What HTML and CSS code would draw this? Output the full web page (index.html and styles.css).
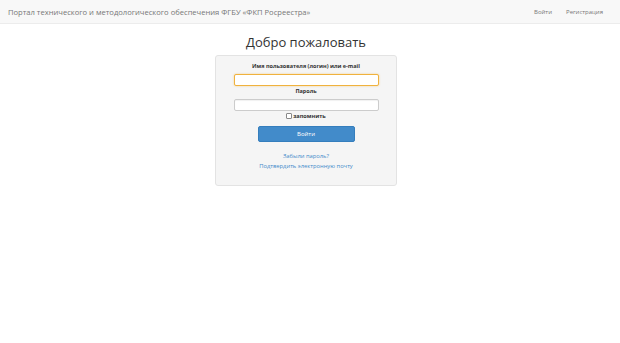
FILE: index.html
```html
<!DOCTYPE html>
<html lang="ru">
<head>
    <meta charset="UTF-8">
    <title>Вход</title>
    <link rel="stylesheet" href="styles.css">
</head>
<body>
    <div class="navbar">
        <a class="brand" href="#">Портал технического и методологического обеспечения ФГБУ «ФКП Росреестра»</a>
        <div class="nav-links">
            <a href="#">Войти</a>
            <a href="#">Регистрация</a>
        </div>
    </div>

    <div class="content">
        <h1 class="title">Добро пожаловать</h1>

        <div class="well">
            <label class="field-label" for="login">Имя пользователя (логин) или e-mail</label>
            <input class="field focus" type="text" id="login">
            <label class="field-label" for="pass">Пароль</label>
            <input class="field" type="password" id="pass">
            <label class="remember"><input type="checkbox">запомнить</label>
            <button class="btn">Войти</button>
            <div class="links">
                <a href="#">Забыли пароль?</a>
                <a href="#">Подтвердить электронную почту</a>
            </div>
        </div>
    </div>
</body>
</html>
```

FILE: styles.css
```css
body {
    margin: 0;
    font-family: "Open Sans", "Noto Sans", sans-serif;
    background-color: #fff;
    color: #333;
}
a {
    text-decoration: none;
}
.navbar {
    height: 24px;
    background-color: #f8f8f8;
    border-bottom: 1px solid #ececec;
    display: flex;
    align-items: center;
    justify-content: space-between;
    padding: 0 17px 0 8px;
    box-sizing: border-box;
}
.brand {
    font-size: 7.6px;
    color: #777;
}
.nav-links {
    display: flex;
    gap: 14px;
}
.nav-links a {
    font-size: 6px;
    color: #777;
}
.content {
    padding-right: 8px;
}
.title {
    margin: 8px 0 0;
    text-align: center;
    font-size: 13px;
    font-weight: normal;
    line-height: 20px;
    color: #333;
}
.well {
    width: 180px;
    margin: 3px auto 0;
    padding: 6px 0 14px;
    background-color: #f5f5f5;
    border: 1px solid #e3e3e3;
    border-radius: 3px;
    display: flex;
    flex-direction: column;
    align-items: center;
}
.field-label {
    font-size: 5.5px;
    font-weight: bold;
    line-height: 9px;
    margin-bottom: 3px;
}
.field {
    width: 145px;
    height: 12px;
    box-sizing: border-box;
    border: 1px solid #ccc;
    border-radius: 2px;
    background: #fff;
    margin: 0 0 1px;
    padding: 0 2px;
    outline: none;
    box-shadow: inset 0 1px 1px rgba(0, 0, 0, 0.06);
}
.field.focus {
    border-color: #f0b23e;
    box-shadow: 0 0 2px rgba(240, 178, 62, 0.6);
}
.remember {
    font-size: 5.6px;
    font-weight: bold;
    line-height: 8px;
    display: flex;
    align-items: center;
}
.remember input {
    appearance: none;
    width: 6px;
    height: 6px;
    margin: 0 1px 0 0;
    border: 1px solid #888;
    border-radius: 1px;
    background: #fff;
}
.btn {
    width: 97px;
    height: 16px;
    margin-top: 6px;
    background-color: #428bca;
    border: 1px solid #357ebd;
    border-radius: 2px;
    color: #fff;
    font-family: inherit;
    font-size: 6px;
    padding: 0;
}
.links {
    margin-top: 10px;
    display: flex;
    flex-direction: column;
    align-items: center;
    gap: 1px;
}
.links a {
    font-size: 5.8px;
    line-height: 9px;
    color: #428bca;
}
```
